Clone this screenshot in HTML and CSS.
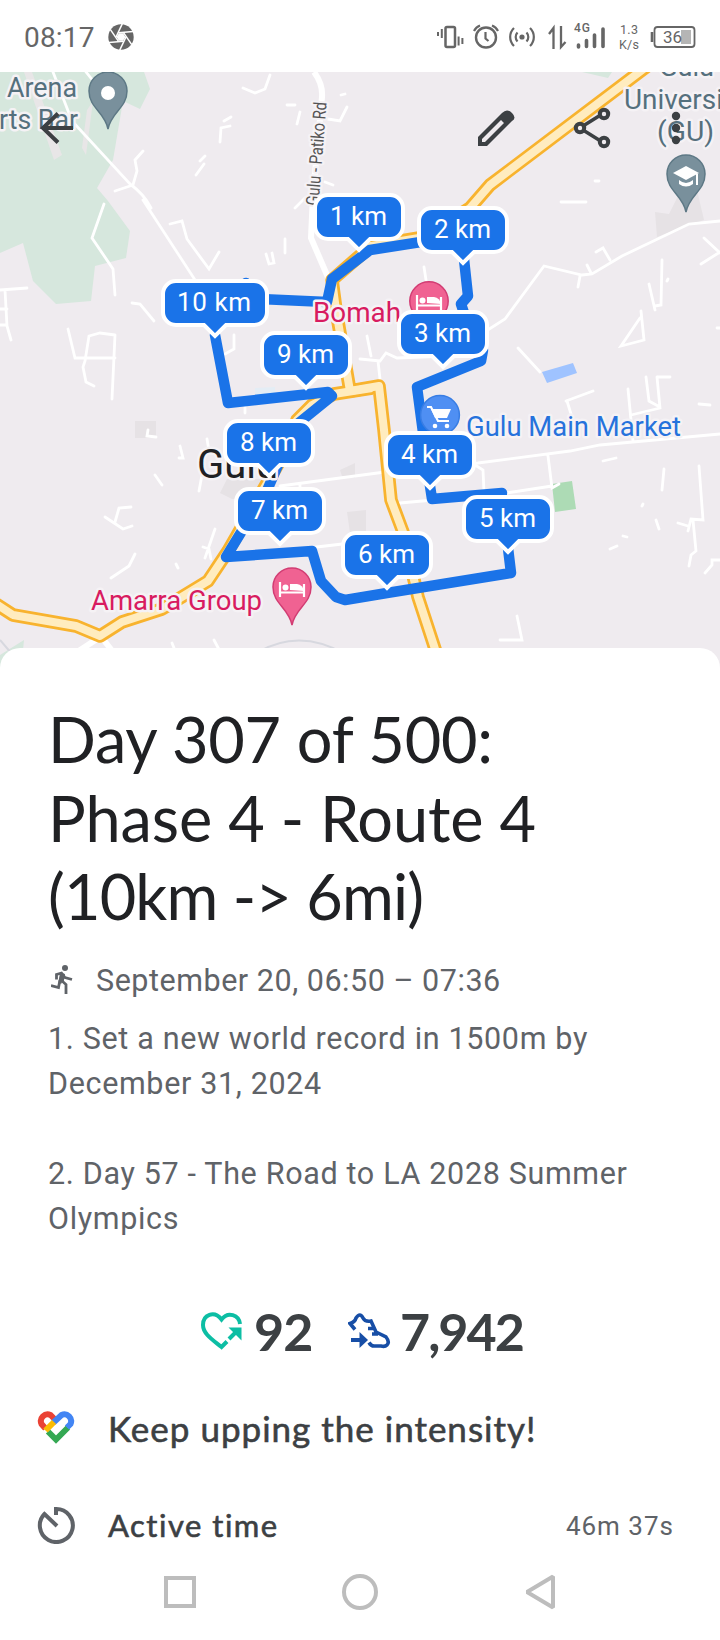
FILE: index.html
```html
<!DOCTYPE html>
<html lang="en">
<head>
<meta charset="utf-8">
<title>Activity</title>
<link rel="stylesheet" href="styles.css">
</head>
<body>
<div class="screen">
  <header class="status">
    <span class="clock">08:17</span>
    <svg class="shutter" width="26" height="26" viewBox="-13 -13 26 26"><circle r="12.7" fill="#666"/><g stroke="#fff" stroke-width="1.500"><path id="bl" d="M-2.500-4.300 12-5.500"/><use href="#bl" transform="rotate(60)"/><use href="#bl" transform="rotate(120)"/><use href="#bl" transform="rotate(180)"/><use href="#bl" transform="rotate(240)"/><use href="#bl" transform="rotate(300)"/></g><path d="M-2.200-3.800 2.200-3.800 4.400 0 2.200 3.800-2.200 3.800-4.400 0Z" fill="#fff"/></svg>
    <svg class="tray" width="280" height="36" viewBox="435 18 280 36" fill="none" stroke="#666">
      <rect x="445.500" y="26" width="9.500" height="20" rx="1.500" stroke-width="2.500"/>
      <path d="M438 31v4M441.800 28v9M458.600 35.500v9M462.400 37v6" stroke-width="2"/>
      <circle cx="486" cy="36.500" r="10" stroke-width="2.400"/>
      <path d="M485.500 31v6.500l3 2.500M474 30q2-4 6-5.500M498 30q-2-4-6-5.500" stroke-width="2.200"/>
      <circle cx="522" cy="36" r="2.600" fill="#666" stroke="none"/>
      <path d="M517.500 31.500a6.500 6.500 0 0 0 0 9M526.500 31.500a6.500 6.500 0 0 1 0 9M514 27a12.500 12.500 0 0 0 0 18M530 27a12.500 12.500 0 0 1 0 18" stroke-width="2.200"/>
      <path d="M553.500 48V27l-4.500 6M561 25v21l4.500-5" stroke-width="2.300"/>
      <path d="M578.500 44v2M586.500 39.500v6M594.500 34v11.500M603 28v17.500" stroke-width="3.600" stroke-linecap="round"/>
      <rect x="654.500" y="26" width="40" height="20" rx="3" stroke-width="1.800"/>
      <path d="M652 31v10" stroke-width="2.600"/>
      <rect x="681" y="29" width="10" height="14" fill="#b5b5b5" stroke="none"/>
      <g class="tray-text" stroke="none" fill="#666">
        <text x="574" y="31" font-size="12" font-weight="500" textLength="16">4G</text>
        <text x="620" y="33" font-size="12.500" textLength="18">1.3</text>
        <text x="619" y="48" font-size="12.500" textLength="20">K/s</text>
        <text x="663" y="42" font-size="17" textLength="19">36</text>
      </g>
    </svg>
  </header>

  <main>
    <section class="map">
      <svg width="720" height="598" viewBox="0 72 720 598">
        <rect y="72" width="720" height="598" fill="#efebef"/>
        <g fill="#d6e7dd">
          <path d="M0 72H144L150 89 140 109 123 101 113 160 97 188 108 201 130 231 126 258 95 266 91 301 56 304 33 281 23 243 0 253Z"/>
          <path d="M582 72 612 72 608 78ZM0 655 24 640 22 660 0 672Z"/>
        </g>
        <path d="M24 72H32L62 155 54 160ZM87 110 93 101 86 155 82 148Z" fill="#e8e6e7"/>
        <g fill="#e6e2e5">
          <path d="M135 421h21v17h-21ZM655 212l14 2 15-30 12 2 8 34-47 17ZM220 493l7-14 35 0v20l-30 0ZM340 470l15-7v15l-13-2ZM347 512l19-2v25l-16-2Z"/>
        </g>
        <path d="M542 372 573 363 577 373 547 383Z" fill="#9fc3ff"/>
        <path d="M552 484 572 481 576 509 555 512Z" fill="#addbb5"/>
        <path d="M255 388l20-1v8h-20Z" fill="#e4edf5"/>
        <path d="M258 652Q300 628 345 654M0 640l12 14" fill="none" stroke="#d7d8df" stroke-width="2"/>

        <g class="lanes">
          <path d="M53 72 72 121 130 184Q144 194 151 208M143 200 197 283"/>
          <path class="wide" d="M314 72Q323 84 322 97L313 195 311 238 330 282"/>
          <path d="M86 72 94 82M143 151l-8 9 2 11-4 14-18 6M104 204 92 238 113 269 115 295M0 290l27-2M5 290l2 36 4 14M0 309h7M0 325h7"/>
          <path d="M132 303l8 1 14 17M68 329l7 29h40M115 335l-3 64M115 335l-15-2-11 3-4 25-2 6 3 15 8 4"/>
          <path d="M170 224l12-3 5 18 22 30 10-17M266 254l3 10 5-1-2-10M285 239v14M234 335v14l-9 5M245 405v8"/>
          <path d="M243 88l12 5 10-4 5-14M287 105h8M300 112l-3 12M341 95l4-1M328 119l12 2 7-14M224 121l7-4M220 142l1-14 9-2M200 161l5-5M196 175l8-11M325 182l8 3M295 208l10-10"/>
          <path d="M148 430l-1 6 9 1M180 446l3 12-4 0M155 475l7 10M207 439l2 12M204 464l-5 27M105 517l18 12 9-3M115 522l4-14 12-1M111 578l18-12 6-12M215 529l-10 29M203 547l6 2 2 10M176 564l2 4"/>
          <path d="M280 486 400 470 478 463 570 451 600 445 720 434M300 485v6M308 548l43-5M400 503l100-9 52-8M548 456l4 32 7-4M475 465l8 5 1 22"/>
          <path d="M360 359l20 2 6-8 11 5 50-2 58-37 39-53 38 9 10-1 30-18 67-32 31-3M367 336l4 20M378 361l2 18M424 267l2 13M580 276l-2 11M587 265l4 8M596 252l7-4 7 12M704 238l16 15M720 252l-19 12"/>
          <path d="M518 348l22 24M566 401l27-10M662 260l-1 45-6 1M649 284l6 26M668 279l-1 2M641 311l3 29-23 6 19-28M646 377l3 24 9 5M658 377h12M657 377l3 31-29 7M628 389l5 52M699 404l11 1M717 328h3"/>
          <path d="M561 202h25M595 181h4M567 401l4 13M603 461l13-3M664 469l-2 21M699 466l4 54-12-1-3 12M678 523l10 3M693 520l3 31-5 4-2 11M720 560h-8v5l-7 8M656 520l3 9M643 504l-1 2M623 536l4 1M610 549l7-3M517 616l5 24h-22M172 643l8 20M214 640l10 19"/>
          <path class="wide" d="M97 639 65 660M103 639 119 660"/>
        </g>

        <defs>
          <path id="main" d="M650 64 490 185 470 208 425 237 371 246 332 280 336 310 350 391 379 386 384 430 391 500 403 532 418 597 437 655"/>
          <path id="west" d="M372 388 334 394 312 405 297 420 285 452 228 551 208 581 162 609 122 622 100 636 76 626 13 615-4 604"/>
        </defs>
        <g fill="none" stroke-linejoin="round">
          <g stroke="#f8b32e" stroke-width="13.500"><use href="#main"/><use href="#west"/></g>
          <g stroke="#ffecbf" stroke-width="8"><use href="#main"/><use href="#west"/></g>
        </g>
        <g fill="none" stroke="#1a73e8" stroke-width="10.500" stroke-linejoin="round" stroke-linecap="round">
          <path d="M246 283 260 299 327 302 332 279 370 250 440 239 463 250 468 296 461 304 467 322"/>
          <path d="M483 350 481 361 417 387 424 440 430 486 432 499 502 493"/>
          <path d="M508 548 511 573 387 593 345 600 336 597 321 581 312 551 226 557 248 521M265 495 286 447M290 430 332 396 328 392 228 403 215 335"/>
        </g>

        <g stroke-width="1.500">
          <g id="graypin"><path d="M108 129C105 112 89 108 89 91A19 19 0 0 1 127 91C127 108 111 112 108 129Z" fill="#79909c" stroke="#5d7885"/></g>
          <circle cx="108" cy="93" r="7" fill="#fff"/>
          <use href="#graypin" transform="translate(578 83)"/>
          <path d="M673 173l13-7 13 7-13 7Z" fill="#fff"/><path d="M679 180q7 6 14 0v4q-7 5-14 0ZM696 174h2v11h-2Z" fill="#fff"/>
          <path d="M292 625C289 608 273 604 273 587A19 19 0 0 1 311 587C311 604 295 608 292 625Z" fill="#f06292" stroke="#d23c73"/>
          <circle cx="429" cy="301" r="19.200" fill="#f06292" stroke="#d23c73"/>
          <g id="bed"><path d="M280 582v15M280 592.500h24M304 597V584" fill="none" stroke="#fff" stroke-width="2.200"/><circle cx="285.500" cy="587.500" r="3" fill="#fff"/><path d="M290 590v-6h7q6 1 7 7Z" fill="#fff"/></g>
          <use href="#bed" transform="translate(137 -287)"/>
          <circle cx="440" cy="415" r="19.400" fill="#4f8ff3" stroke="#387de4"/>
          <path d="M427 407h4l7 14h11" fill="none" stroke="#fff" stroke-width="2.200"/><path d="M431 409h20l-4 9h-12Z" fill="#fff"/><circle cx="435" cy="426" r="2.300" fill="#fff"/><circle cx="447" cy="426" r="2.300" fill="#fff"/>
        </g>

        <g class="places">
          <g fill="#55707d">
            <text x="-8" y="97">,</text>
            <text x="7" y="97" textLength="70" lengthAdjust="spacingAndGlyphs">Arena</text>
            <text x="-1" y="129" textLength="79" lengthAdjust="spacingAndGlyphs">rts Bar</text>
            <text x="659" y="76" textLength="55" lengthAdjust="spacingAndGlyphs">Gulu</text>
            <text x="624" y="108.500" textLength="99" lengthAdjust="spacingAndGlyphs">Universi</text>
            <text x="657" y="141" textLength="57" lengthAdjust="spacingAndGlyphs">(GU)</text>
          </g>
          <text fill="#d81b60" x="313" y="322" textLength="88" lengthAdjust="spacingAndGlyphs">Bomah</text>
          <text fill="#d81b60" x="91" y="609.500" textLength="171" lengthAdjust="spacingAndGlyphs">Amarra Group</text>
          <text fill="#2672dc" x="466" y="436" textLength="215" lengthAdjust="spacingAndGlyphs">Gulu Main Market</text>
          <text class="city" x="197" y="478" textLength="81" lengthAdjust="spacingAndGlyphs">Gulu</text>
          <text class="road" transform="translate(318.500 206) rotate(-85.500)" textLength="104" lengthAdjust="spacingAndGlyphs">Gulu - Patiko Rd</text>
        </g>

        <defs><path id="tag" d="M-31-2H31A13 13 0 0 1 44 11V29A13 13 0 0 1 31 42H11L0 53-11 42H-31A13 13 0 0 1-44 29V11A13 13 0 0 1-31-2Z"/></defs>
        <g class="tags">
          <g transform="translate(359 197)"><use href="#tag"/><text x="-29" y="28" textLength="57">1 km</text></g>
          <g transform="translate(463 210)"><use href="#tag"/><text x="-29" y="28" textLength="57">2 km</text></g>
          <g transform="translate(443 314)"><use href="#tag"/><text x="-29" y="28" textLength="57">3 km</text></g>
          <g transform="translate(430 435)"><use href="#tag"/><text x="-29" y="28" textLength="57">4 km</text></g>
          <g transform="translate(508 499)"><use href="#tag"/><text x="-29" y="28" textLength="57">5 km</text></g>
          <g transform="translate(387 535)"><use href="#tag"/><text x="-29" y="28" textLength="57">6 km</text></g>
          <g transform="translate(280 491)"><use href="#tag"/><text x="-29" y="28" textLength="57">7 km</text></g>
          <g transform="translate(269 423)"><use href="#tag"/><text x="-29" y="28" textLength="57">8 km</text></g>
          <g transform="translate(306 335)"><use href="#tag"/><text x="-29" y="28" textLength="57">9 km</text></g>
          <g transform="translate(215 283)"><path d="M-39-2H39A13 13 0 0 1 52 11V29A13 13 0 0 1 39 42H11L0 53-11 42H-39A13 13 0 0 1-52 29V11A13 13 0 0 1-39-2Z"/><text x="-38" y="28" textLength="74">10 km</text></g>
        </g>
      </svg>
      <nav class="actions">
        <svg class="back" width="36" height="36" viewBox="0 0 36 36" fill="none" stroke="#3c4043" stroke-width="4"><path d="M34 18H4M19 3.500 4 18 19 32.500"/></svg>
        <svg width="38" height="38" viewBox="0 0 38 38"><path d="M1 37V28L25 4Q30-1 35 4T35 12L10 37ZM5 33H8L27 14 24 11 5 30Z" fill="#3c4043" fill-rule="evenodd"/></svg>
        <svg width="40" height="42" viewBox="0 0 40 42" fill="none" stroke="#3c4043" stroke-width="4"><path d="M11 19 27 9M11 23 27 33" stroke-width="3.500"/><circle cx="8" cy="21" r="4.200"/><circle cx="32" cy="7" r="4.200"/><circle cx="32" cy="35" r="4.200"/></svg>
        <svg width="10" height="34" viewBox="0 0 10 34" fill="#3c4043"><circle cx="5" cy="5" r="4.200"/><circle cx="5" cy="17" r="4.200"/><circle cx="5" cy="29" r="4.200"/></svg>
      </nav>
    </section>

    <section class="sheet">
      <h1><span class="t1">Day 307 of 500:</span><br><span class="t2">Phase 4 - Route 4</span><br><span class="t3">(10km -&gt; 6mi)</span></h1>
      <div class="when">
        <svg width="22" height="30" viewBox="0 0 22 30" fill="none" stroke="#5f6368" stroke-width="3"><circle cx="14" cy="3" r="3" fill="#5f6368" stroke="none"/><path d="M11 8.500 9 18.500M5.500 14.500V9.500l5-1.500 3.500 4.500 7 2" stroke-width="2.800"/><path d="M9 7.500l5 1.500-1.500 9-5-1Z" fill="#5f6368" stroke="none"/><path d="M10 15 15 19.500V29M9 15 7.500 22.500 0 20.500" stroke-width="2.800"/></svg>
        <span>September 20, 06:50 – 07:36</span>
      </div>
      <p class="notes">1. Set a new world record in 1500m by<br>December 31, 2024<br><br>2. Day 57 - The Road to LA 2028 Summer<br>Olympics</p>
      <div class="points">
        <svg width="42" height="38" viewBox="0 0 42 38" fill="none" stroke="#0dbea4" stroke-width="4"><path d="M39 12C38 3 27-1 20.500 7.500 13 -2 2 3 2 13 2 22 12 28 20.500 35L26 29.500"/><path d="M28 27 35 20" /><path d="M27.500 15.500H40.500V28.500Z" fill="#0dbea4" stroke="none"/></svg>
        <strong class="heart">92</strong>
        <svg class="shoe" width="43" height="36" viewBox="0 0 43 36" fill="none" stroke="#174ea6" stroke-width="4"><path d="M7 16.500 2 10.500Q7 9 8 5 12-1 15 5 17 9 23 8L28 19 38 24Q42 29 39 32 37 34 33 33H26Q23 33 21 29.500M20 15.500h6M24 21h6" stroke-width="3.600"/><path d="M3 27h10" /><path d="M11.500 19 20 27 11.500 35Z" fill="#174ea6" stroke="none"/></svg>
        <strong class="steps">7,942</strong>
      </div>
      <div class="row tip">
        <svg width="40" height="35" viewBox="0 0 40 35" fill="none" stroke-width="6"><path d="M9.500 18.500 5.500 14A6.800 6.800 0 0 1 14.500 5L19.500 10" stroke="#ea4335"/><path d="M12 21.500 20 29.500 32 17.500" stroke="#34a853"/><path d="M17.500 12.500 25.500 5A6.800 6.800 0 0 1 34.500 14L31 17.500" stroke="#4285f4"/><path d="M9.500 20.500 18 12" stroke="#fbbc04"/></svg>
        <span>Keep upping the intensity!</span>
      </div>
      <div class="row time">
        <svg width="38" height="38" viewBox="0 0 38 38" fill="none" stroke="#5f6368" stroke-width="4"><path d="M19 9V3A16.500 16.500 0 1 1 7.500 8L20 20"/></svg>
        <span class="name">Active time</span>
        <span class="value">46m 37s</span>
      </div>
    </section>
  </main>

  <footer class="navbar">
    <svg width="36" height="38" viewBox="0 0 36 38" fill="none" stroke="#bdbdbd" stroke-width="4"><rect x="4" y="5" width="28" height="28"/></svg>
    <svg width="36" height="38" viewBox="0 0 36 38" fill="none" stroke="#bdbdbd" stroke-width="4"><circle cx="18" cy="19" r="16"/></svg>
    <svg width="36" height="38" viewBox="0 0 36 38" fill="none" stroke="#bdbdbd" stroke-width="4" stroke-linejoin="bevel"><path d="M31 3.500V34.500L5 19Z"/></svg>
  </footer>
</div>
</body>
</html>
```
FILE: styles.css
```css
* { box-sizing: border-box; }
body { margin: 0; background: #fff; font-family: Roboto, "Liberation Sans", sans-serif; }
svg { display: block; flex: none; }
.screen { width: 720px; height: 1640px; display: flex; flex-direction: column; overflow: hidden; }

.status { height: 72px; flex: none; display: flex; align-items: center; padding: 1px 5px 0 24px; color: #666; }
.clock { font-size: 28px; letter-spacing: 0.2px; line-height: 36px; margin-top: 2px; width: 84px; }
.tray { margin-left: auto; }

main { height: 1472px; flex: none; overflow: hidden; }
.map { display: grid; height: 576px; }
.map > * { grid-area: 1 / 1; }
.map > svg { z-index: 0; }
.lanes { fill: none; stroke: #fff; stroke-width: 2.800; stroke-linecap: round; }
.lanes .wide { stroke-width: 6; stroke-linecap: butt; }
.places text { font-size: 28px; stroke: #f5f2f5; stroke-width: 5px; stroke-linejoin: round; paint-order: stroke; }
.places .city { font-size: 40px; fill: #202124; }
.places .road { font-size: 18px; fill: #555; }
.tags use, .tags g > path { fill: #1a73e8; stroke: #fff; stroke-width: 4; }
.tags text { font-size: 26px; fill: #fff; }
.actions { z-index: 1; height: 112px; display: flex; align-items: center; padding-right: 39px; }
.back { margin: 0 402px 0 39px; }
.actions svg:nth-child(3) { margin-left: 57px; }
.actions svg:nth-child(4) { margin-left: auto; }

.sheet { position: relative; z-index: 2; height: 896px; background: #fff; border-radius: 20px 20px 0 0; padding-top: 52px; }
h1 { margin: 0 0 0 48px; font: 400 63px/78.500px Lato, Roboto, sans-serif; color: #202124; white-space: nowrap; }
.t1 { letter-spacing: -0.200px; }
.t2 { letter-spacing: -0.100px; }
.t3 { letter-spacing: -0.850px; }
.when { display: flex; align-items: center; padding-left: 51px; height: 45px; margin-top: 22px; gap: 23px; font-size: 30.500px; letter-spacing: 0.530px; color: #5f6368; }
.notes { margin: 13px 0 0 48px; font-size: 30.500px; line-height: 45px; letter-spacing: 0.660px; color: #5f6368; white-space: nowrap; }
.points { display: flex; align-items: center; height: 70px; margin-top: 55px; padding-left: 201px; color: #3c4043; font-family: Lato, Roboto, sans-serif; }
.points strong { font-size: 52px; line-height: 64px; font-weight: 700; }
.heart { margin-left: 11px; width: 94px; letter-spacing: -0.800px; }
.steps { margin-left: 9px; letter-spacing: -2px; }
.row { display: flex; align-items: center; color: #3c4043; font-family: Lato, Roboto, sans-serif; -webkit-text-stroke: 0.600px; }
.tip { height: 58px; margin-top: 33px; padding-left: 36px; gap: 32px; font-size: 35px; letter-spacing: 1px; }
.time { height: 50px; margin-top: 43px; padding: 0 46px 0 37px; gap: 33px; font-size: 31px; letter-spacing: 1.500px; }
.value { margin: 3px 0 0 auto; font-family: Roboto, sans-serif; font-size: 26px; color: #5f6368; letter-spacing: 1px; -webkit-text-stroke: 0; }

.navbar { flex: 1; display: flex; justify-content: center; gap: 144px; padding-top: 29px; background: #fff; }
```
